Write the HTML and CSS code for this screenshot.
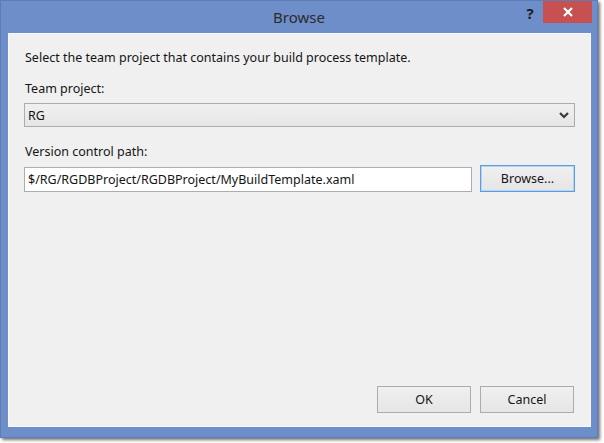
FILE: index.html
```html
<!DOCTYPE html>
<html>
<head>
<meta charset="utf-8">
<link rel="stylesheet" href="styles.css">
</head>
<body>
<div class="window">
  <div class="titlebar">
    <div class="title">Browse</div>
    <div class="help">?</div>
    <div class="close">
      <svg width="12" height="10" viewBox="0 0 12 10"><path d="M2 1 L10 9 M10 1 L2 9" stroke="#fff" stroke-width="2.2" fill="none"/></svg>
    </div>
  </div>
  <div class="client">
    <div class="intro">Select the team project that contains your build process template.</div>
    <div class="label label-team">Team project:</div>
    <div class="combo">
      <span class="combo-text">RG</span>
      <svg class="chevron" width="10" height="7" viewBox="0 0 10 7"><path d="M1 1 L5 5 L9 1" stroke="#3a3a3a" stroke-width="2.2" fill="none"/></svg>
    </div>
    <div class="label label-path">Version control path:</div>
    <div class="path-row">
      <div class="textbox">$/RG/RGDBProject/RGDBProject/MyBuildTemplate.xaml</div>
      <div class="btn btn-focus">Browse...</div>
    </div>
    <div class="spacer"></div>
    <div class="footer">
      <div class="btn">OK</div>
      <div class="btn">Cancel</div>
    </div>
  </div>
</div>
</body>
</html>
```
FILE: styles.css
```css
html, body {
  margin: 0;
  padding: 0;
  background: #ffffff;
}
body {
  width: 604px;
  height: 443px;
  overflow: hidden;
  font-family: "Noto Sans", "Open Sans", sans-serif;
  font-size: 12.5px;
  color: #151515;
}
.window {
  box-sizing: border-box;
  width: 598px;
  height: 438px;
  background: #6e8ec9;
  border: 1px solid #5d7db8;
  box-shadow: 2px 2px 3px rgba(0, 0, 0, 0.55);
  display: flex;
  flex-direction: column;
}
.titlebar {
  height: 32px;
  display: flex;
  align-items: flex-start;
}
.title {
  flex: 1;
  padding-left: 80px;
  text-align: center;
  font-size: 15px;
  line-height: 32px;
  color: #2b2b2b;
}
.help {
  width: 26px;
  line-height: 24px;
  text-align: center;
  font-weight: bold;
  font-size: 15px;
  color: #1d1d1d;
}
.close {
  width: 49px;
  height: 22px;
  background: #c75050;
  margin-right: 5px;
  display: flex;
  align-items: center;
  justify-content: center;
}
.client {
  flex: 1;
  margin: 0 6px 10px 7px;
  background: #f0f0f0;
  border: 1px solid #f7f8fb;
  padding: 16px 15px 13px 15px;
  display: flex;
  flex-direction: column;
}
.intro {
  line-height: 16px;
  padding-left: 1px;
}
.label {
  line-height: 16px;
  padding-left: 1px;
}
.label-team {
  margin-top: 15px;
}
.combo {
  box-sizing: border-box;
  margin-top: 6px;
  height: 24px;
  border: 1px solid #acacac;
  background: linear-gradient(#f0f0f0, #e6e6e6);
  display: flex;
  align-items: center;
  padding: 0 5px 0 3px;
}
.combo-text {
  flex: 1;
}
.label-path {
  margin-top: 17px;
}
.path-row {
  margin-top: 5px;
  display: flex;
  align-items: flex-end;
  gap: 8px;
}
.textbox {
  box-sizing: border-box;
  flex: 1;
  height: 25px;
  border: 1px solid #abadb3;
  background: #ffffff;
  line-height: 23px;
  padding-left: 3px;
}
.btn {
  box-sizing: border-box;
  width: 94px;
  height: 27px;
  border: 1px solid #acacac;
  background: linear-gradient(#f0f0f0, #e5e5e5);
  display: flex;
  align-items: center;
  justify-content: center;
}
.btn-focus {
  width: 95px;
  border: 1px solid #5a9de0;
  box-shadow: inset 0 0 0 1px #b3d4f3;
}
.spacer {
  flex: 1;
}
.footer {
  display: flex;
  justify-content: flex-end;
  gap: 9px;
  padding-right: 1px;
}
```
